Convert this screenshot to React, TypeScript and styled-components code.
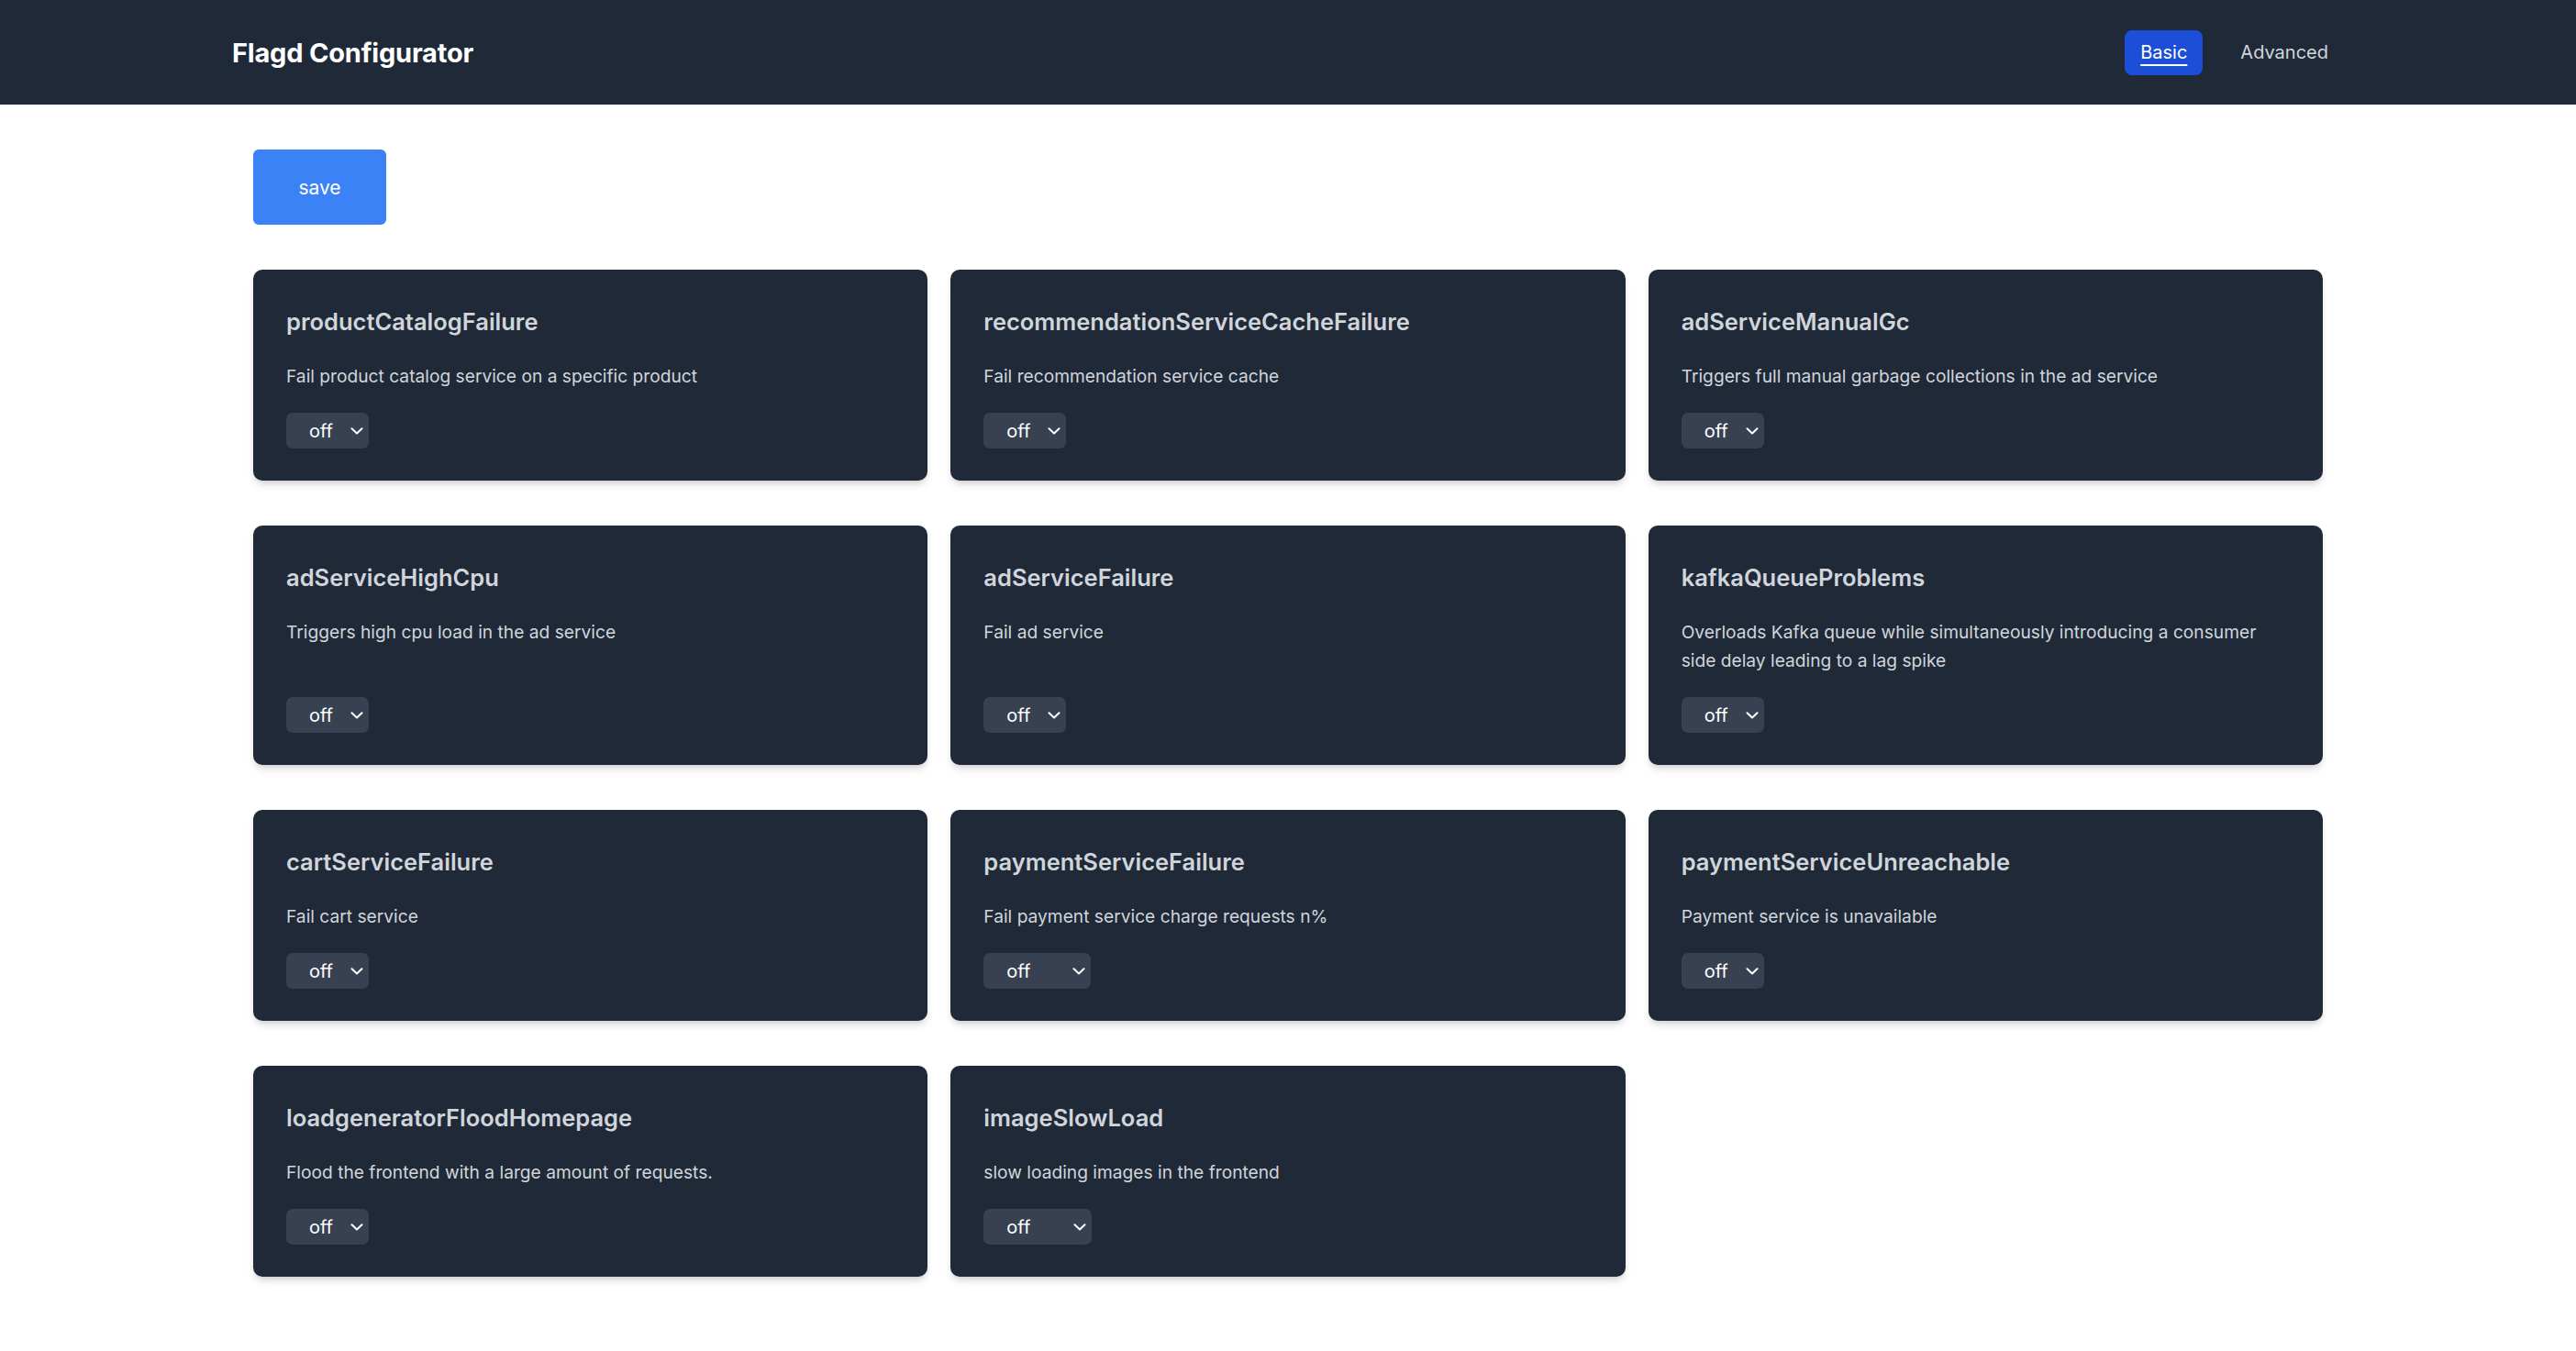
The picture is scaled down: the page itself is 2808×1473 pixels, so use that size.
import React from 'react'
import { type ReactElement } from 'react'
import styled, { createGlobalStyle } from 'styled-components'

const GlobalStyle = createGlobalStyle`
body {
  margin: 0;
  background: #ffffff;
  font-family: Inter, 'Noto Sans', sans-serif;
}
`

const Header = styled.header`
background-color: #1f2937;
height: 114px;
display: flex;
align-items: center;
`
const HeaderInner = styled.div`
width: 2302px;
margin: 0 auto;
display: flex;
align-items: center;
justify-content: space-between;
`
const Brand = styled.h1`
margin: 0;
color: #ffffff;
font-size: 29px;
font-weight: 700;
letter-spacing: -0.2px;
`
const Nav = styled.nav`
display: flex;
align-items: center;
gap: 24px;
`
const NavLink = styled.a<{ $active?: boolean }>`
display: flex;
align-items: center;
height: 49px;
padding: 0 17px;
border-radius: 8px;
font-size: 20px;
color: ${p => (p.$active ? '#ffffff' : '#d1d5db')};
background: ${p => (p.$active ? '#1d4ed8' : 'transparent')};
text-decoration: ${p => (p.$active ? 'underline' : 'none')};
text-decoration-thickness: 2px;
text-underline-offset: 6px;
cursor: pointer;
`

const Main = styled.main`
width: 2256px;
margin: 0 auto;
padding: 49px 0;
display: flex;
flex-direction: column;
align-items: flex-start;
gap: 49px;
`
const SaveButton = styled.button`
height: 82px;
width: 145px;
border: none;
border-radius: 6px;
background: #3b82f6;
color: #ffffff;
font-family: Inter, sans-serif;
font-size: 21px;
cursor: pointer;
`
const Grid = styled.div`
width: 100%;
display: grid;
grid-template-columns: repeat(3, 1fr);
column-gap: 25px;
row-gap: 49px;
`
const Card = styled.div`
background: #1f2937;
border-radius: 10px;
padding: 38px 36px 35px;
display: flex;
flex-direction: column;
align-items: flex-start;
box-shadow: 0 6px 10px -2px rgba(0, 0, 0, 0.14), 0 3px 6px -3px rgba(0, 0, 0, 0.12);
`
const FlagName = styled.h2`
margin: 0;
color: #d1d5db;
font-size: 25.5px;
font-weight: 600;
line-height: 38px;
`
const FlagDesc = styled.p`
margin: 25px 0 24px;
flex: 1;
color: #d1d5db;
font-size: 19.2px;
line-height: 31px;
`
const SelectWrap = styled.div`
position: relative;
display: inline-flex;
`
const Select = styled.select`
appearance: none;
-webkit-appearance: none;
height: 39px;
padding: 0 38px 0 25px;
border: none;
border-radius: 7px;
background: #374151;
color: #ffffff;
font-family: Inter, sans-serif;
font-size: 20px;
outline: none;
`
const Chevron = styled.svg`
position: absolute;
right: 6px;
top: 16px;
pointer-events: none;
`

type Flag = { name: string, description: string, variants: string[] }

const flags: Flag[] = [
  { name: 'productCatalogFailure', description: 'Fail product catalog service on a specific product', variants: ['on', 'off'] },
  { name: 'recommendationServiceCacheFailure', description: 'Fail recommendation service cache', variants: ['on', 'off'] },
  { name: 'adServiceManualGc', description: 'Triggers full manual garbage collections in the ad service', variants: ['on', 'off'] },
  { name: 'adServiceHighCpu', description: 'Triggers high cpu load in the ad service', variants: ['on', 'off'] },
  { name: 'adServiceFailure', description: 'Fail ad service', variants: ['on', 'off'] },
  { name: 'kafkaQueueProblems', description: 'Overloads Kafka queue while simultaneously introducing a consumer side delay leading to a lag spike', variants: ['on', 'off'] },
  { name: 'cartServiceFailure', description: 'Fail cart service', variants: ['on', 'off'] },
  { name: 'paymentServiceFailure', description: 'Fail payment service charge requests n%', variants: ['100%', '90%', '75%', '50%', '25%', '10%', 'off'] },
  { name: 'paymentServiceUnreachable', description: 'Payment service is unavailable', variants: ['on', 'off'] },
  { name: 'loadgeneratorFloodHomepage', description: 'Flood the frontend with a large amount of requests.', variants: ['on', 'off'] },
  { name: 'imageSlowLoad', description: 'slow loading images in the frontend', variants: ['10sec', '5sec', 'off'] }
]

function FlagCard ({ flag }: { flag: Flag }): ReactElement {
  return (
    <Card>
      <FlagName>{flag.name}</FlagName>
      <FlagDesc>{flag.description}</FlagDesc>
      <SelectWrap>
        <Select defaultValue='off'>
          {flag.variants.map(v => <option key={v} value={v}>{v}</option>)}
        </Select>
        <Chevron width='14' height='8' viewBox='0 0 14 8'>
          <path d='M1.5 1.2 L7 6.5 L12.5 1.2' fill='none' stroke='#ffffff' strokeWidth='2' strokeLinecap='round' strokeLinejoin='round' />
        </Chevron>
      </SelectWrap>
    </Card>
  )
}

export default function App (): ReactElement {
  return (
    <>
      <GlobalStyle />
      <Header>
        <HeaderInner>
          <Brand>Flagd Configurator</Brand>
          <Nav>
            <NavLink $active>Basic</NavLink>
            <NavLink>Advanced</NavLink>
          </Nav>
        </HeaderInner>
      </Header>
      <Main>
        <SaveButton>save</SaveButton>
        <Grid>
          {flags.map(f => <FlagCard key={f.name} flag={f} />)}
        </Grid>
      </Main>
    </>
  )
}
